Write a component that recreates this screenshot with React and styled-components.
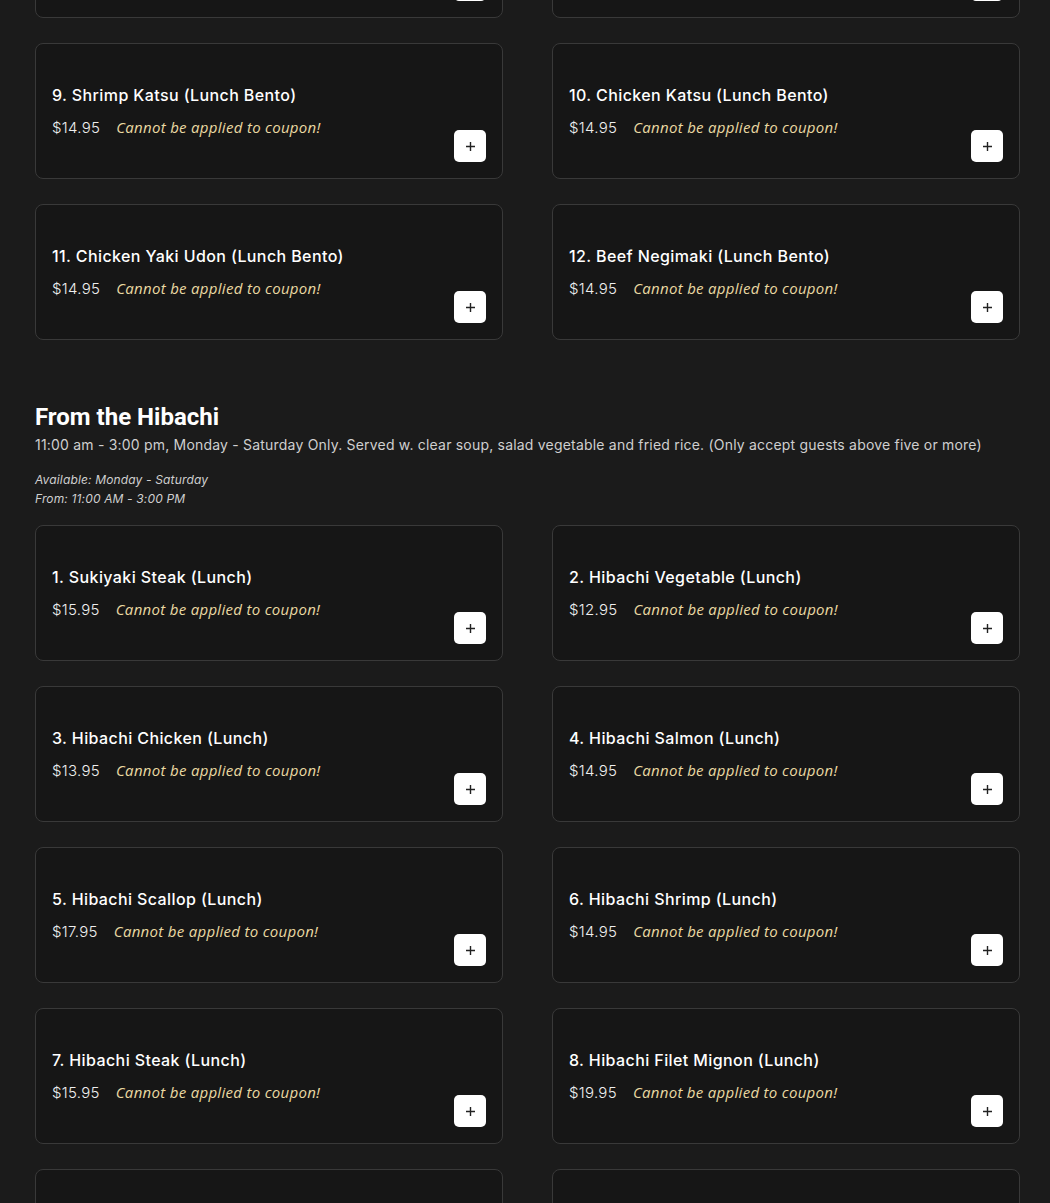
import React from 'react';
import styled, { createGlobalStyle } from 'styled-components';

const GlobalStyle = createGlobalStyle`
  html, body {
    margin: 0;
    padding: 0;
    background: #1b1b1b;
    color: #fff;
    font-family: Inter, "Open Sans", sans-serif;
  }
`;

const Page = styled.div`
  width: 985px;
  padding-left: 35px;
  height: 1203px;
  overflow: hidden;
`;

const Grid = styled.div`
  display: grid;
  grid-template-columns: 468px 468px;
  column-gap: 49px;
  row-gap: 25px;
  margin-top: ${({ offset }) => offset || 0}px;
`;

const Card = styled.div`
  position: relative;
  box-sizing: border-box;
  height: 136px;
  background: #161616;
  border: 1px solid #393939;
  border-radius: 8px;
  padding: 39px 16px 0;
`;

const Title = styled.div`
  font-size: 16px;
  font-weight: 500;
  line-height: 24px;
  letter-spacing: 0.4px;
  color: #fff;
`;

const PriceRow = styled.div`
  display: flex;
  align-items: baseline;
  gap: 16px;
  margin-top: 10px;
`;

const Price = styled.span`
  font-size: 15px;
  font-weight: 300;
  letter-spacing: 0.3px;
  color: #eee;
`;

const Coupon = styled.span`
  font-family: "Open Sans", sans-serif;
  font-style: italic;
  font-size: 15px;
  color: #ead9a2;
  letter-spacing: 0.3px;
`;

const AddButton = styled.button`
  position: absolute;
  right: 16px;
  bottom: 16px;
  width: 32px;
  height: 32px;
  border: 0;
  border-radius: 5px;
  background: #fff;
  display: flex;
  align-items: center;
  justify-content: center;
  padding: 0;
  cursor: pointer;
`;

const Section = styled.div`
  padding: 62px 0 17px;
`;

const Heading = styled.h2`
  margin: 0;
  font-family: Roboto, sans-serif;
  font-size: 24px;
  font-weight: 700;
  line-height: 30px;
  color: #fff;
`;

const Desc = styled.p`
  margin: 0;
  font-size: 14px;
  line-height: 26px;
  letter-spacing: 0.2px;
  color: #cfcfcf;
`;

const Avail = styled.div`
  margin-top: 12px;
  font-size: 12px;
  font-style: italic;
  line-height: 19px;
  letter-spacing: 0.15px;
  color: #cfcfcf;
`;

const Plus = () => (
  <svg width="11" height="11" viewBox="0 0 11 11">
    <path d="M5.5 1v9M1 5.5h9" stroke="#222" strokeWidth="1.4" />
  </svg>
);

const Item = ({ name, price }) => (
  <Card>
    <Title>{name}</Title>
    <PriceRow>
      <Price>{price}</Price>
      <Coupon>Cannot be applied to coupon!</Coupon>
    </PriceRow>
    <AddButton aria-label="add">
      <Plus />
    </AddButton>
  </Card>
);

const bento = [
  ['7. Teriyaki (Lunch Bento)', '$14.95'],
  ['8. Tempura (Lunch Bento)', '$14.95'],
  ['9. Shrimp Katsu (Lunch Bento)', '$14.95'],
  ['10. Chicken Katsu (Lunch Bento)', '$14.95'],
  ['11. Chicken Yaki Udon (Lunch Bento)', '$14.95'],
  ['12. Beef Negimaki (Lunch Bento)', '$14.95'],
];

const hibachi = [
  ['1. Sukiyaki Steak (Lunch)', '$15.95'],
  ['2. Hibachi Vegetable (Lunch)', '$12.95'],
  ['3. Hibachi Chicken (Lunch)', '$13.95'],
  ['4. Hibachi Salmon (Lunch)', '$14.95'],
  ['5. Hibachi Scallop (Lunch)', '$17.95'],
  ['6. Hibachi Shrimp (Lunch)', '$14.95'],
  ['7. Hibachi Steak (Lunch)', '$15.95'],
  ['8. Hibachi Filet Mignon (Lunch)', '$19.95'],
  ['9. Hibachi Shrimp & Chicken (Lunch)', '$16.95'],
  ['10. Hibachi Steak & Chicken (Lunch)', '$17.95'],
];

export default function App() {
  return (
    <>
      <GlobalStyle />
      <Page>
        <Grid offset={-118}>
          {bento.map(([n, p]) => <Item key={n} name={n} price={p} />)}
        </Grid>
        <Section>
          <Heading>From the Hibachi</Heading>
          <Desc>
            11:00 am - 3:00 pm, Monday - Saturday Only. Served w. clear soup, salad vegetable and fried rice. (Only accept guests above five or more)
          </Desc>
          <Avail>
            Available: Monday - Saturday
            <br />
            From: 11:00 AM - 3:00 PM
          </Avail>
        </Section>
        <Grid>
          {hibachi.map(([n, p]) => <Item key={n} name={n} price={p} />)}
        </Grid>
      </Page>
    </>
  );
}
